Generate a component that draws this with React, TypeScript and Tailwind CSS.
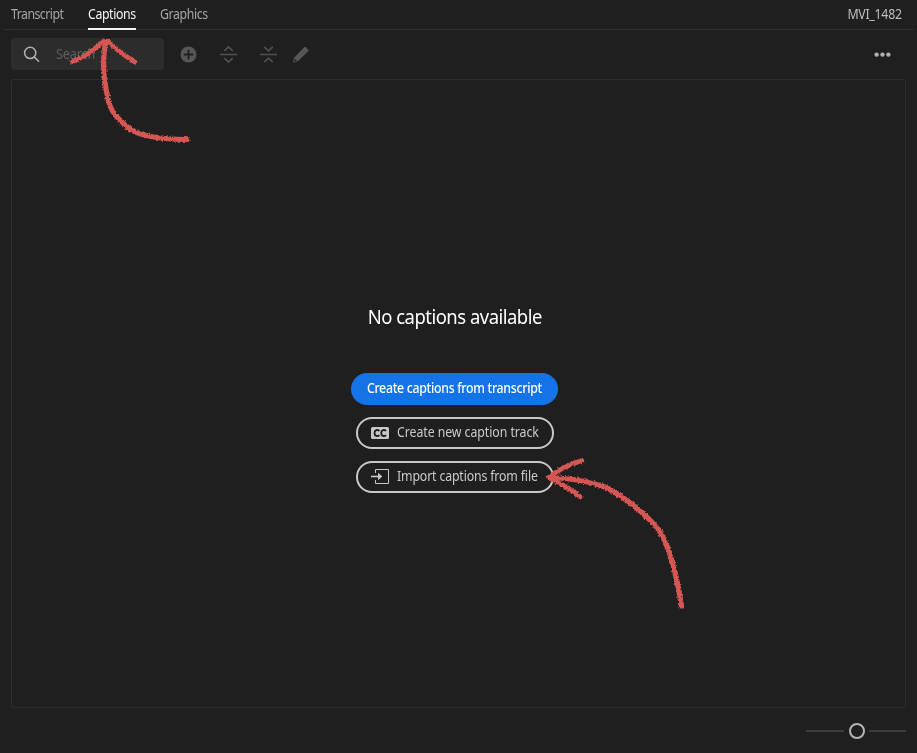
import React from 'react';

const tabs = [
  { label: 'Transcript', className: 'ml-[11px] w-[53px] text-[#a6a6a6]', text: 'tracking-[-0.6px]' },
  { label: 'Captions', className: 'ml-6 w-12 text-[#f4f4f4] border-b-2 border-[#f4f4f4]', text: 'tracking-[-0.45px]' },
  { label: 'Graphics', className: 'ml-6 w-[49px] text-[#a6a6a6]', text: 'tracking-[-0.43px]' },
];

function Toolbar() {
  return (
    <div className="flex h-[49px] items-start pl-[11px] pt-2">
      <div className="flex h-8 w-[153px] items-center rounded-[4px] bg-[#2c2c2c]">
        <svg className="ml-3 h-[18px] w-[18px]" viewBox="0 0 18 18" fill="none" stroke="#b0b0b0" strokeWidth="1.5" strokeLinecap="round">
          <circle cx="7.2" cy="7.9" r="5.6" />
          <path d="M11.4 12.1 15.6 16.3" />
        </svg>
        <span className="ml-[15px] inline-block origin-left scale-x-[0.9] text-[14px] leading-5 tracking-[-0.15px] text-[#5f5f5f]">Search</span>
      </div>
      <svg className="ml-4 mt-2 h-[17px] w-[17px]" viewBox="0 0 17 17">
        <circle cx="8.5" cy="8.5" r="8" fill="#565656" />
        <path d="M8.5 3.8v9.4M3.8 8.5h9.4" stroke="#1f1f1f" strokeWidth="1.8" />
      </svg>
      <svg className="ml-[22px] mt-2 h-[18px] w-[19px]" viewBox="0 0 19 18" fill="none" stroke="#505050" strokeWidth="1.7">
        <path d="M1 8.5h17M5.3 4.8 9.5.9l4.2 3.9M5.3 12.2l4.2 3.9 4.2-3.9" />
      </svg>
      <svg className="ml-[21px] mt-2 h-[18px] w-[19px]" viewBox="0 0 19 18" fill="none" stroke="#505050" strokeWidth="1.7">
        <path d="M1 8.5h17M5.3.9l4.2 3.9L13.7.9M5.3 16.1l4.2-3.9 4.2 3.9" />
      </svg>
      <svg className="ml-[14px] mt-2 h-[18px] w-[18px]" viewBox="0 0 18 18">
        <path d="M12.2 1.2Q13 .4 13.8 1.2L16.2 3.6Q17 4.4 16.2 5.2L5.8 15.3.9 16.6 2.2 11.5Z" fill="#565656" />
        <path d="m2.9 12.8 1.9 1.9-2.6.8Z" fill="#1f1f1f" />
      </svg>
      <svg className="ml-auto mr-[26px] mt-[14px] h-[6px] w-[17px]" viewBox="0 0 17 6" fill="#b0b0b0">
        <circle cx="2.6" cy="2.6" r="2.2" />
        <circle cx="8.5" cy="2.6" r="2.2" />
        <circle cx="14.4" cy="2.6" r="2.2" />
      </svg>
    </div>
  );
}

function CaptionActions() {
  return (
    <div className="flex w-[207px] flex-col items-center">
      <h1 className="ml-px origin-center scale-x-[0.9] whitespace-nowrap text-[20.5px] leading-[27px] tracking-[-0.55px] text-white">No captions available</h1>
      <button className="mt-[43px] flex h-8 w-[207px] items-center justify-center whitespace-nowrap rounded-full bg-[#1473e6] pb-[3px] text-[14px] font-medium tracking-[-0.34px] text-white">
        <span className="inline-block origin-center scale-x-[0.88]">Create captions from transcript</span>
      </button>
      <button className="ml-px mt-[12px] flex h-8 w-[198px] items-center whitespace-nowrap rounded-full border-2 border-[#c8c8c8] pl-[13px] text-[14px] tracking-[-0.07px] text-[#cacaca]">
        <svg className="-mt-px h-3 w-[18px] shrink-0" viewBox="0 0 18 12" fill="none">
          <rect width="18" height="12" rx="1.5" fill="#c8c8c8" />
          <path d="M8.4 3.9C6.6 2.3 3.5 2.6 3.5 6s3.1 3.700 4.900 2.100M15.100 3.900C13.300 2.300 10.200 2.600 10.200 6s3.100 3.700 4.900 2.100" stroke="#1f1f1f" strokeWidth="1.9" />
        </svg>
        <span className="ml-2 inline-block origin-left scale-x-[0.88] pb-[3px]">Create new caption track</span>
      </button>
      <button className="ml-px mt-[12px] flex h-8 w-[198px] items-center whitespace-nowrap rounded-full border-2 border-[#c8c8c8] pl-[13px] text-[14px] tracking-[-0.17px] text-[#cacaca]">
        <svg className="-mt-px h-[15px] w-[18px] shrink-0" viewBox="0 0 18 15" fill="none" stroke="#c8c8c8">
          <path d="M4.5 4V.5h13v14h-13V11" strokeWidth="1" />
          <path d="M0 7.5h9" strokeWidth="1.6" />
          <path d="M7 3.7 11.3 7.5 7 11.3Z" fill="#c8c8c8" stroke="none" />
        </svg>
        <span className="ml-2 inline-block origin-left scale-x-[0.88] pb-[3px]">Import captions from file</span>
      </button>
    </div>
  );
}

function ChalkArrows() {
  return (
    <svg className="pointer-events-none absolute left-0 top-0 h-[753px] w-[917px]" viewBox="0 0 917 753" fill="none" stroke="#d65753" strokeLinecap="round" strokeLinejoin="round">
      <defs>
        <filter id="chalk" filterUnits="userSpaceOnUse" x="0" y="0" width="917" height="753">
          <feTurbulence type="fractalNoise" baseFrequency="0.55" numOctaves="2" seed="8" />
          <feDisplacementMap in="SourceGraphic" scale="3.8" xChannelSelector="R" yChannelSelector="G" />
        </filter>
      </defs>
      <g filter="url(#chalk)">
        <path strokeWidth="5.2" d="M105.5 42C102 62 103.500 78 106.500 92C109 104 110 109 117 117C128 129 135 134 151 136.500C164 139 176 139.500 187 139.500" />
        <path strokeWidth="4.6" d="M72 62Q88 55 98 46Q102 41 108 41Q119 53 135 62" />
        <path strokeWidth="5.2" d="M549 477.500C566 478 584 480 602 486C618 492 634 505 650 520C662 532 666 542 671 558C677 577 679 590 681.500 606" />
        <path strokeWidth="4.8" d="M582 460.500Q561 467 549 477.500Q564 485 580 496.500" />
      </g>
    </svg>
  );
}

export default function App() {
  return (
    <main className="relative flex h-[753px] w-[917px] flex-col overflow-hidden bg-[#1f1f1f] font-['Noto_Sans',sans-serif]">
      <header className="mx-[3px] flex h-[30px] shrink-0 border-b border-[#303030]">
        <nav className="-ml-[3px] flex h-[30px]">
          {tabs.map((tab) => (
            <div key={tab.label} className={`h-[30px] whitespace-nowrap text-[14px] leading-[28px] ${tab.className}`}>
              <span className={`inline-block origin-left scale-x-[0.88] ${tab.text}`}>{tab.label}</span>
            </div>
          ))}
        </nav>
        <span className="ml-auto mr-[12px] inline-block origin-right scale-x-[0.88] text-[14px] leading-[27px] tracking-[-0.3px] text-[#bebebe]">MVI_1482</span>
      </header>
      <Toolbar />
      <section className="mx-[11px] flex h-[629px] shrink-0 justify-center rounded-[2px] border border-[#2d2d2d] pr-[8px] pt-[223px]">
        <CaptionActions />
      </section>
      <footer className="flex h-[45px] items-center justify-end pr-[11px]">
        <div className="flex items-center gap-[4px]">
          <div className="h-[2px] w-[38px] bg-[#3b3b3b]" />
          <div className="ml-px h-4 w-4 rounded-full border-2 border-[#b4b4b4]" />
          <div className="h-[2px] w-[37px] bg-[#3b3b3b]" />
        </div>
      </footer>
      <ChalkArrows />
    </main>
  );
}
